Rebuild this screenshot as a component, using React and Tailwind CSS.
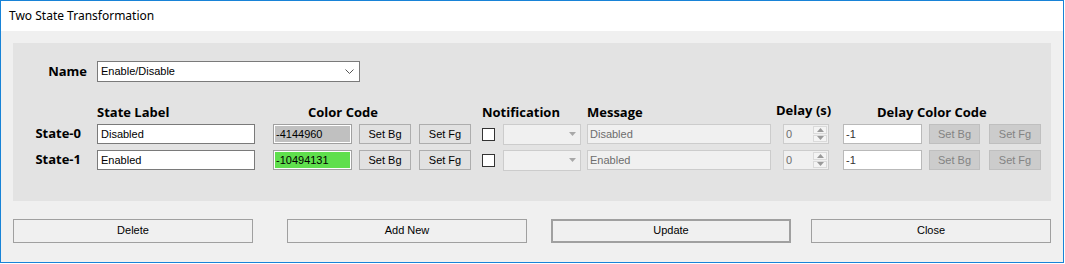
import React from 'react';

const ui = { fontFamily: "'Liberation Sans', Arial, sans-serif" };

const Heading = ({ width, children, className = '' }) => (
  <div className={`shrink-0 font-['Open_Sans',sans-serif] font-bold text-[13px] leading-[20px] text-black ${width} ${className}`}>
    {children}
  </div>
);

const SmallButton = ({ label, disabled, className = '' }) => (
  <div
    className={`shrink-0 h-[20px] flex items-center justify-center border text-[11px] font-['Liberation_Sans',Arial,sans-serif] ${
      disabled
        ? 'bg-[#cccccc] border-[#bfbfbf] text-[#838383]'
        : 'bg-[#e1e1e1] border-[#adadad] text-black'
    } ${className}`}
  >
    {label}
  </div>
);

const DisabledCombo = () => (
  <div className="shrink-0 ml-[8px] w-[78px] h-[21px] border border-[#cccccc] bg-[#f0f0f0] flex items-center justify-end pr-[4px]">
    <svg width="7" height="4" viewBox="0 0 7 4">
      <path d="M0 0 L7 0 L3.5 4 Z" fill="#a8a8a8" />
    </svg>
  </div>
);

const Spinner = () => (
  <div className="shrink-0 ml-[12px] w-[46px] h-[20px] border border-[#cccccc] bg-[#f0f0f0] flex text-[11px] font-['Liberation_Sans',Arial,sans-serif]">
    <div className="flex-1 pl-[2px] leading-[18px] text-[#6d6d6d]">0</div>
    <div className="w-[15px] flex flex-col gap-[1px] pr-[1px] py-[1px]">
      <div className="flex-1 border border-[#dadada] bg-[#f4f4f4] flex items-center justify-center">
        <svg width="7" height="4" viewBox="0 0 7 4">
          <path d="M0 4 L7 4 L3.5 0 Z" fill="#9a9a9a" />
        </svg>
      </div>
      <div className="flex-1 border border-[#dadada] bg-[#f4f4f4] flex items-center justify-center">
        <svg width="7" height="4" viewBox="0 0 7 4">
          <path d="M0 0 L7 0 L3.5 4 Z" fill="#9a9a9a" />
        </svg>
      </div>
    </div>
  </div>
);

const StateRow = ({ name, label, code, colorClass, className = '' }) => (
  <div className={`flex items-center h-[20px] ${className}`}>
    <div className="shrink-0 w-[84px] pr-[16px] text-right font-['Open_Sans',sans-serif] font-bold text-[13px] text-black">
      {name}
    </div>
    <div className="shrink-0 w-[158px] h-[20px] border border-[#7a7a7a] bg-white pl-[3px] text-[11px] leading-[18px] text-black" style={ui}>
      {label}
    </div>
    <div
      className={`shrink-0 ml-[18px] w-[79px] h-[20px] border border-[#a0a0a0] shadow-[inset_1px_1px_0_#ffffff,inset_-1px_-1px_0_#ffffff] pl-[2px] text-[11px] leading-[18px] text-black ${colorClass}`}
      style={ui}
    >
      {code}
    </div>
    <SmallButton label="Set Bg" className="ml-[7px] w-[52px]" />
    <SmallButton label="Set Fg" className="ml-[8px] w-[52px]" />
    <div className="shrink-0 ml-[11px] w-[13px] h-[13px] border border-[#333333] bg-white" />
    <DisabledCombo />
    <div className="shrink-0 ml-[6px] w-[184px] h-[20px] border border-[#cccccc] bg-[#f0f0f0] pl-[2px] text-[11px] leading-[18px] text-[#6d6d6d]" style={ui}>
      {label}
    </div>
    <Spinner />
    <div className="shrink-0 ml-[14px] w-[79px] h-[20px] border border-[#b9b9b9] bg-white pl-[2px] text-[11px] leading-[18px] text-[#333333]" style={ui}>
      -1
    </div>
    <SmallButton label="Set Bg" disabled className="ml-[7px] w-[51px]" />
    <SmallButton label="Set Fg" disabled className="ml-[9px] w-[52px]" />
  </div>
);

const DialogButton = ({ label, isDefault, className = '' }) => (
  <div
    className={`shrink-0 w-[240px] h-[24px] flex items-center justify-center pb-[2px] bg-[#f0f0f0] text-[11px] text-black ${
      isDefault ? 'border-2 border-[#a0a0a0]' : 'border border-[#a0a0a0]'
    } ${className}`}
    style={ui}
  >
    {label}
  </div>
);

export default function App() {
  return (
    <div className="w-[1065px] h-[264px] bg-white">
      <div className="w-[1064px] h-[263px] border border-[#1883d7] bg-[#f0f0f0] flex flex-col">
        {/* Title bar */}
        <div className="h-[30px] shrink-0 bg-white flex items-center pl-[8px] font-['Noto_Sans',sans-serif] text-[12px] text-black">
          Two State Transformation
        </div>

        <div className="px-[12px] pt-[12px]">
          {/* Editing panel */}
          <div className="h-[158px] bg-[#e3e3e3] flex flex-col">
            <div className="flex items-center h-[21px] mt-[18px]">
              <div className="shrink-0 w-[84px] pr-[10px] text-right font-['Open_Sans',sans-serif] font-bold text-[13px] text-black">
                Name
              </div>
              <div className="shrink-0 w-[263px] h-[21px] border border-[#7a7a7a] bg-white flex items-center justify-between pl-[3px] pr-[5px] text-[11px] text-black" style={ui}>
                <span>Enable/Disable</span>
                <svg width="9" height="5" viewBox="0 0 9 5">
                  <path d="M0.5 0.5 L4.5 4.5 L8.5 0.5" fill="none" stroke="#555555" strokeWidth="1" />
                </svg>
              </div>
            </div>

            <div className="flex h-[20px] mt-[20px]">
              <Heading width="w-[84px]" />
              <Heading width="w-[211px]">State Label</Heading>
              <Heading width="w-[174px]">Color Code</Heading>
              <Heading width="w-[105px]">Notification</Heading>
              <Heading width="w-[189px]">Message</Heading>
              <Heading width="w-[101px]" className="-mt-[2px]">Delay (s)</Heading>
              <Heading width="w-[150px]">Delay Color Code</Heading>
            </div>

            <StateRow name="State-0" label="Disabled" code="-4144960" colorClass="bg-[#c0c0c0]" className="mt-[2px]" />
            <StateRow name="State-1" label="Enabled" code="-10494131" colorClass="bg-[#5fdf4d]" className="mt-[6px]" />
          </div>

          {/* Dialog buttons */}
          <div className="flex mt-[18px]">
            <DialogButton label="Delete" />
            <DialogButton label="Add New" className="ml-[34px]" />
            <DialogButton label="Update" isDefault className="ml-[24px]" />
            <DialogButton label="Close" className="ml-[20px]" />
          </div>
        </div>
      </div>
    </div>
  );
}
